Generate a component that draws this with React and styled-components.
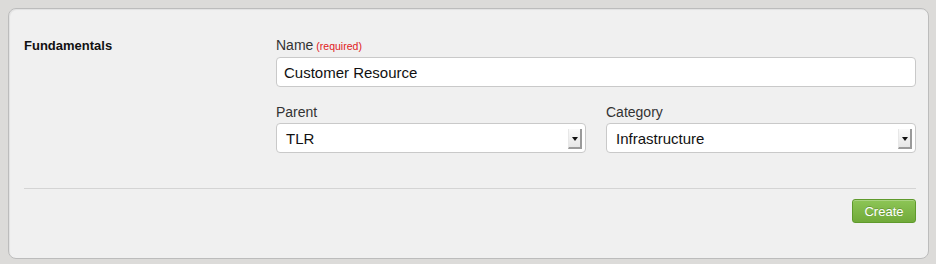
import React from "react";
import styled, { createGlobalStyle } from "styled-components";

const Global = createGlobalStyle`
  html, body { margin: 0; padding: 0; background: #dcdbd9; }
  body { font-family: "Liberation Sans", Arial, sans-serif; }
`;

const Page = styled.div`
  padding: 8px 7px 6px 8px;
`;

const Card = styled.div`
  box-sizing: border-box;
  width: 921px;
  height: 251px;
  background: #f0f0f0;
  border: 1px solid #bcbcbc;
  border-radius: 8px;
  box-shadow: inset 1px 1px 1px rgba(0,0,0,0.06);
  padding: 28px 12px 0 15px;
`;

const Section = styled.div`
  display: grid;
  grid-template-columns: 252px 640px;
`;

const SectionTitle = styled.div`
  font-weight: bold;
  font-size: 13px;
  color: #111;
  line-height: 16px;
  padding-top: 1px;
`;

const Fields = styled.div`
  display: flex;
  flex-direction: column;
`;

const Row = styled.div`
  display: flex;
  gap: 20px;
  margin-top: ${(p) => p.$mt || 0}px;
`;

const Field = styled.div`
  display: flex;
  flex-direction: column;
  flex: 1;
`;

const Label = styled.label`
  font-size: 14px;
  color: #333;
  line-height: 16px;
  margin-bottom: 3px;
`;

const Required = styled.span`
  font-size: 10.5px;
  color: #e0201c;
  margin-left: 3px;
`;

const Input = styled.div`
  box-sizing: border-box;
  height: 30px;
  background: #fff;
  border: 1px solid #c9c9c9;
  border-radius: 4px;
  padding: 0 7px;
  display: flex;
  align-items: center;
  font-family: "Liberation Sans", Arial, sans-serif;
  font-size: 15px;
  color: #111;
  position: relative;
`;

const SelectBox = styled(Input)`
  padding-left: 9px;
`;

const ArrowBtn = styled.div`
  position: absolute;
  right: 3px;
  top: 5px;
  width: 14px;
  height: 20px;
  box-sizing: border-box;
  background: linear-gradient(#fafafa, #e6e6e6);
  border-right: 2px solid #9a9a9a;
  border-bottom: 2px solid #9a9a9a;
  border-left: 1px solid #e8e8e8;
  display: flex;
  align-items: center;
  justify-content: center;
`;

const Tri = styled.div`
  width: 0;
  height: 0;
  border-left: 3px solid transparent;
  border-right: 3px solid transparent;
  border-top: 4px solid #111;
  margin-top: 1px;
`;

const Divider = styled.hr`
  border: 0;
  border-top: 1px solid #d4d4d4;
  margin: 35px 0 0 0;
  width: 892px;
`;

const Footer = styled.div`
  display: flex;
  justify-content: flex-end;
  padding-top: 10px;
`;

const Button = styled.button`
  box-sizing: border-box;
  width: 64px;
  height: 24px;
  border: 1px solid #5f9a2c;
  border-radius: 3px;
  background: linear-gradient(#8dc556, #71aa3a);
  color: #fff;
  font-family: "Liberation Sans", Arial, sans-serif;
  font-size: 13px;
  text-shadow: 0 -1px 0 rgba(0,0,0,0.2);
  padding: 0;
  box-shadow: inset 0 1px 0 rgba(255,255,255,0.25);
`;

function Select({ value }) {
  return (
    <SelectBox>
      {value}
      <ArrowBtn>
        <Tri />
      </ArrowBtn>
    </SelectBox>
  );
}

export default function App() {
  return (
    <>
      <Global />
      <Page>
        <Card>
          <Section>
            <SectionTitle>Fundamentals</SectionTitle>
            <Fields>
              <Field>
                <Label>
                  Name<Required>(required)</Required>
                </Label>
                <Input>Customer Resource</Input>
              </Field>
              <Row $mt={17}>
                <Field>
                  <Label>Parent</Label>
                  <Select value="TLR" />
                </Field>
                <Field>
                  <Label>Category</Label>
                  <Select value="Infrastructure" />
                </Field>
              </Row>
            </Fields>
          </Section>
          <Divider />
          <Footer>
            <Button>Create</Button>
          </Footer>
        </Card>
      </Page>
    </>
  );
}
